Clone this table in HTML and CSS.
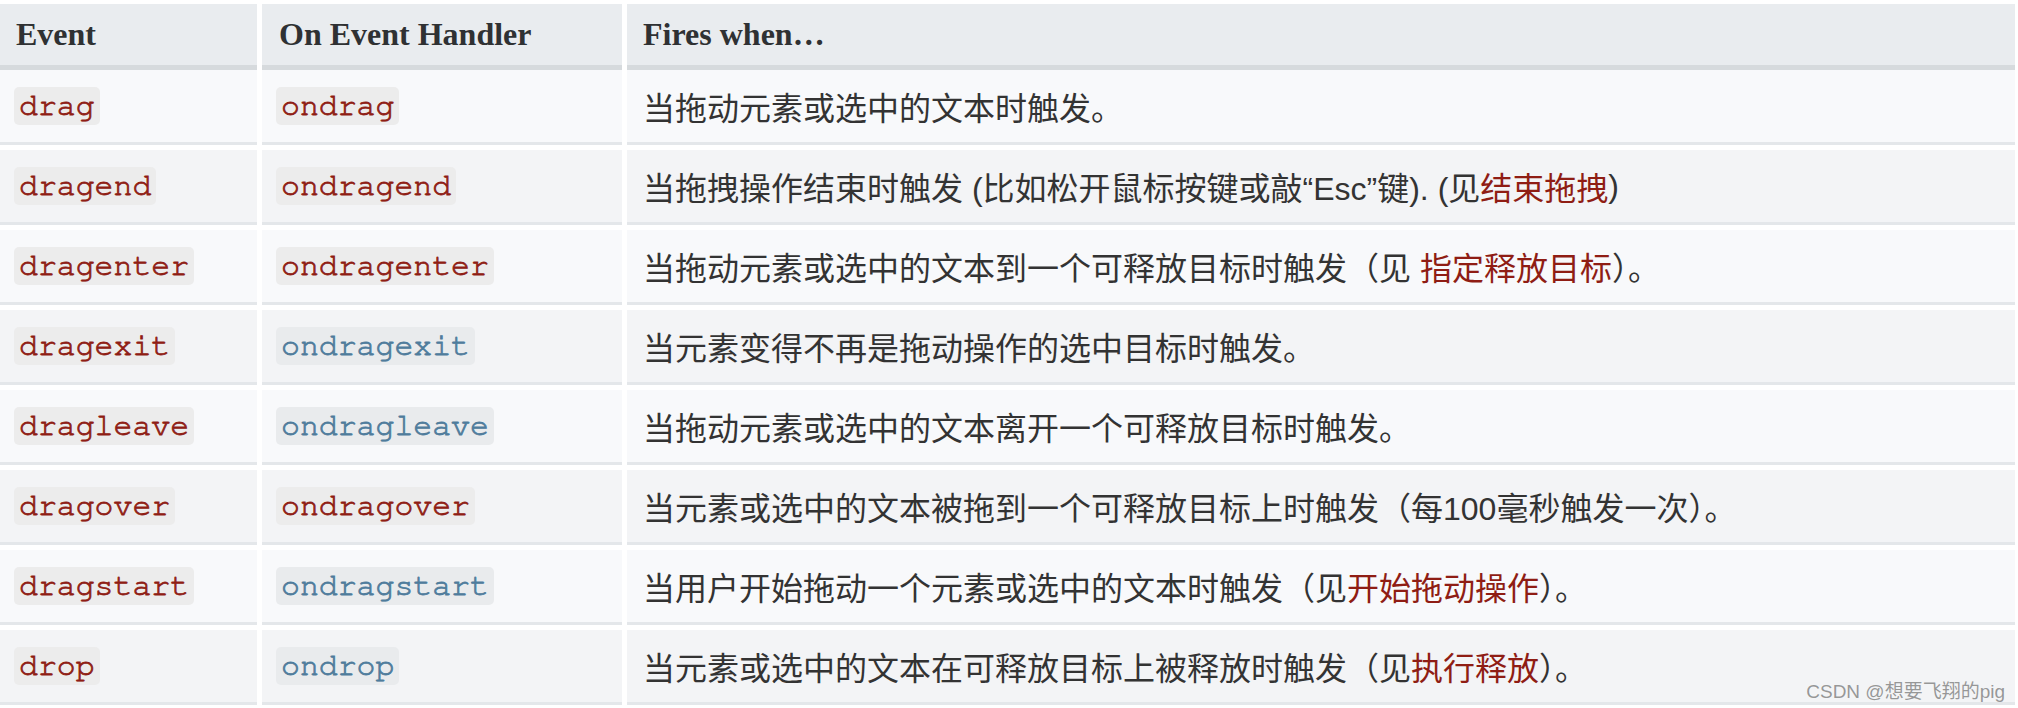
FILE: index.html
```html
<!DOCTYPE html>
<html lang="zh-CN">
<head>
<meta charset="utf-8">
<title>Drag events</title>
<link rel="stylesheet" href="styles.css">
</head>
<body>
<div class="table">
  <div class="row head">
    <div class="cell">Event</div>
    <div class="cell">On Event Handler</div>
    <div class="cell">Fires when…</div>
  </div>
  <div class="body">
    <div class="row light">
      <div class="cell"><code class="red">drag</code></div>
      <div class="cell"><code class="red">ondrag</code></div>
      <div class="cell desc">当拖动元素或选中的文本时触发。</div>
    </div>
    <div class="row dark">
      <div class="cell"><code class="red">dragend</code></div>
      <div class="cell"><code class="red">ondragend</code></div>
      <div class="cell desc">当拖拽操作结束时触发 (比如松开鼠标按键或敲“Esc”键). (见<a class="link">结束拖拽</a>)</div>
    </div>
    <div class="row light">
      <div class="cell"><code class="red">dragenter</code></div>
      <div class="cell"><code class="red">ondragenter</code></div>
      <div class="cell desc">当拖动元素或选中的文本到一个可释放目标时触发（见&nbsp;<a class="link">指定释放目标</a>）。</div>
    </div>
    <div class="row dark">
      <div class="cell"><code class="red">dragexit</code></div>
      <div class="cell"><code class="blue">ondragexit</code></div>
      <div class="cell desc">当元素变得不再是拖动操作的选中目标时触发。</div>
    </div>
    <div class="row light">
      <div class="cell"><code class="red">dragleave</code></div>
      <div class="cell"><code class="blue">ondragleave</code></div>
      <div class="cell desc">当拖动元素或选中的文本离开一个可释放目标时触发。</div>
    </div>
    <div class="row dark">
      <div class="cell"><code class="red">dragover</code></div>
      <div class="cell"><code class="red">ondragover</code></div>
      <div class="cell desc">当元素或选中的文本被拖到一个可释放目标上时触发（每100毫秒触发一次）。</div>
    </div>
    <div class="row light">
      <div class="cell"><code class="red">dragstart</code></div>
      <div class="cell"><code class="blue">ondragstart</code></div>
      <div class="cell desc">当用户开始拖动一个元素或选中的文本时触发（见<a class="link">开始拖动操作</a>）。</div>
    </div>
    <div class="row dark">
      <div class="cell"><code class="red">drop</code></div>
      <div class="cell"><code class="blue">ondrop</code></div>
      <div class="cell desc">当元素或选中的文本在可释放目标上被释放时触发（见<a class="link">执行释放</a>）。</div>
    </div>
  </div>
</div>
<div class="watermark">CSDN @想要飞翔的pig</div>
</body>
</html>
```

FILE: styles.css
```css
html, body {
  margin: 0;
  padding: 0;
  background: #ffffff;
  overflow: hidden;
}
body {
  box-sizing: border-box;
  padding-top: 4px;
  width: 2018px;
  height: 708px;
  position: relative;
  font-family: "Liberation Sans", "Noto Sans CJK SC", sans-serif;
  color: #333;
}
.table {
  width: 2015px;
}
.row {
  display: grid;
  grid-template-columns: 257px 360px 1fr;
  column-gap: 5px;
}
.cell {
  display: flex;
  align-items: center;
  padding: 0 14px;
  box-sizing: border-box;
}
.head .cell {
  height: 66px;
  background: #e9ecef;
  border-bottom: 5px solid #d6dadd;
  font-family: "Liberation Serif", serif;
  font-weight: bold;
  font-size: 32px;
  color: #2f3133;
  padding-left: 16px;
}
.head .cell:nth-child(2) { padding-left: 17px; }
.body {
  display: flex;
  flex-direction: column;
  gap: 5px;
}
.body .cell {
  height: 75px;
  border-bottom: 3px solid #e4e7ea;
}
.light .cell { background: #f8f9fb; }
.dark .cell { background: #f3f4f6; }
code {
  font-family: "Nimbus Mono PS", "FreeMono", "Courier New", "Liberation Mono", monospace;
  font-size: 31.5px;
  line-height: 38px;
  padding: 0 5px;
  border-radius: 5px;
  background: #ececec;
  -webkit-text-stroke: 0.8px currentColor;
}
code.red { color: #8f1d14; }
code.blue { color: #4f7c9c; background: #e9ebed; }
.desc {
  font-size: 32px;
  color: #333;
  padding-left: 16px;
  white-space: nowrap;
}
.link {
  color: #8f1d14;
  text-decoration: none;
}
.watermark {
  position: absolute;
  right: 13px;
  bottom: 5px;
  font-size: 19px;
  color: rgba(120, 120, 120, 0.75);
  font-family: "Liberation Sans", "Noto Sans CJK SC", sans-serif;
}
```
